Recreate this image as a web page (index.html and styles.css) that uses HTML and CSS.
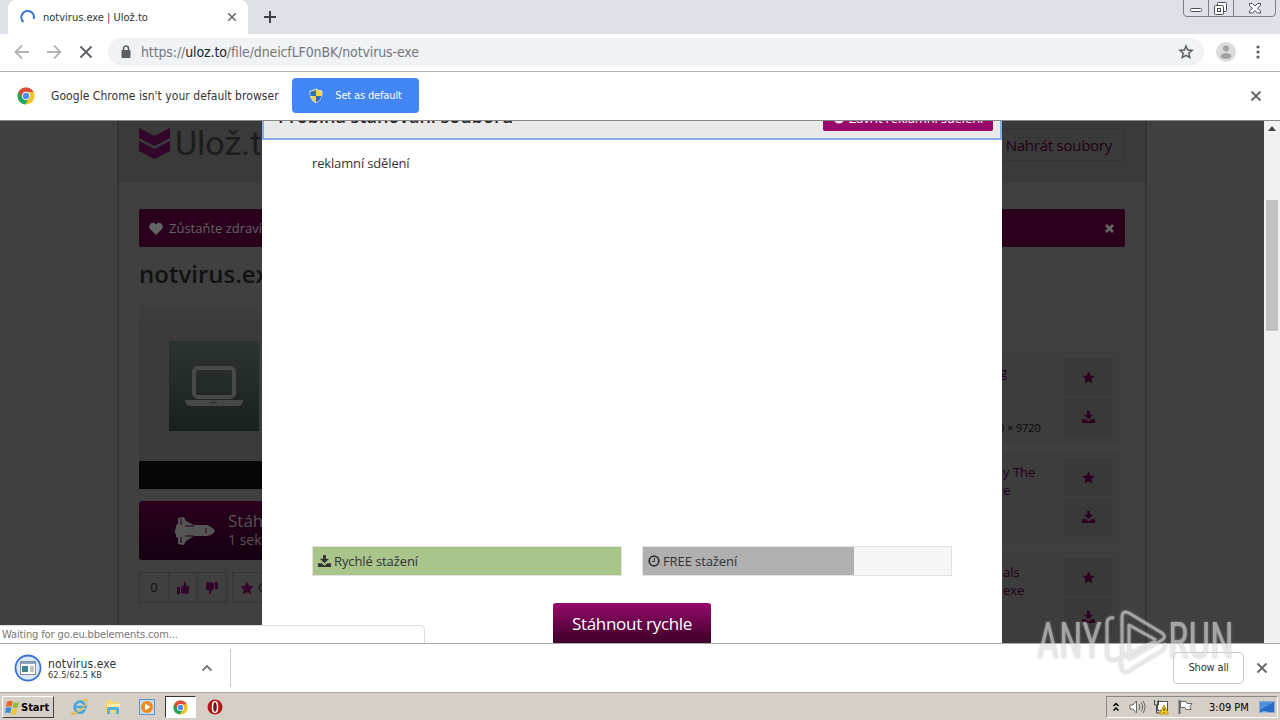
FILE: index.html
```html
<!DOCTYPE html>
<html lang="cs">
<head>
  <meta charset="UTF-8">
  <meta name="viewport" content="width=device-width, initial-scale=1.0">
  <title>notvirus.exe | Ulož.to</title>
  <link rel="stylesheet" href="styles.css">
</head>
<body>
  <!-- shared icons -->
  <svg class="defs" width="0" height="0">
    <symbol id="star" viewBox="0 0 14 14"><path d="M7 .5l2 4.3 4.6.6-3.4 3.2.9 4.7L7 11l-4.1 2.3.9-4.7L.4 5.4 5 4.8z"/></symbol>
    <symbol id="download" viewBox="0 0 14 14"><path d="M5.500 0h3v4h3.500L7 9 2 4h3.500zM0 9h4l3 2.500L10 9h4v4H0z"/></symbol>
    <symbol id="chrome" viewBox="0 0 18 18">
      <circle cx="9" cy="9" r="8.5" fill="#fbc116"/>
      <path d="M9 9L1.6 4.8A8.5 8.5 0 0 0 8 17.4l4.5-6.4z" fill="#1da462"/>
      <path d="M1.6 4.8A8.5 8.5 0 0 1 16.5 5H9L5.5 11z" fill="#dd4b3e"/>
      <circle cx="9" cy="9" r="4.2" fill="#fff"/>
      <circle cx="9" cy="9" r="3.2" fill="#4c8bf5"/>
    </symbol>
    <symbol id="cross" viewBox="0 0 12 12"><path d="M1.5 1.5l9 9m0-9l-9 9" fill="none" stroke="currentColor" stroke-width="1.8"/></symbol>
  </svg>

  <div class="tabstrip">
    <div class="tab">
      <svg class="spinner" width="16" height="16"><path d="M3.500 13a6.300 6.300 0 1 1 10.200-3" fill="none" stroke="#2f6fdc" stroke-width="2"/></svg>
      <span class="tab-title">notvirus.exe | Ulož.to</span>
      <svg class="gray" width="10" height="10"><use href="#cross"/></svg>
    </div>
    <svg class="new-tab" width="12" height="12"><path d="M6 0v12M0 6h12" stroke="#3c4043" stroke-width="2"/></svg>
    <svg class="window-buttons" width="94" height="17" fill="none" stroke="#7c7f87">
      <path d="M.5 0v13q0 3.500 3.500 3.500h85q3.500 0 3.500-3.500V0M25.500 0v16M50.500 0v16"/>
      <g stroke="#4a4d55" fill="#fff">
        <rect x="7.500" y="8.500" width="11" height="3" rx="1"/>
        <rect x="34.500" y="2.500" width="9" height="9" rx="1"/>
        <rect x="31.500" y="5.500" width="9" height="9" rx="1"/>
        <rect x="34.500" y="8.500" width="3" height="3"/>
        <path d="M66.500 3.500h3l2.500 2.500 2.500-2.500h3v2l-3 2.800 3 2.700v2h-3L72 10.500 69.500 13h-3v-2l3-2.700-3-2.800z"/>
      </g>
    </svg>
  </div>

  <div class="toolbar">
    <svg class="nav" width="96" height="36" fill="none" stroke-width="1.800">
      <path d="M29 18H15.500m6.500-6.500L15.500 18l6.500 6.500M47 18h13.500m-6.500-6.500l6.500 6.500-6.500 6.500" stroke="#b4b4b4"/>
      <path d="M80.500 12.500l11 11m0-11l-11 11" stroke="#5a5d61"/>
    </svg>
    <div class="omnibox">
      <svg width="10" height="14"><path d="M2.500 6V3.500a2.500 2.500 0 0 1 5 0V6" fill="none" stroke="#5a5d61" stroke-width="1.500"/><rect x=".5" y="5" width="9" height="8" rx="1" fill="#5a5d61"/></svg>
      <span class="url">https://<b>uloz.to</b>/file/dneicfLF0nBK/notvirus-exe</span>
      <svg class="bookmark" width="16" height="16"><path d="M8 2l1.700 4 4.400.4-3.300 2.900 1 4.300L8 11.400l-3.800 2.200 1-4.300L1.900 6.400 6.300 6z" fill="none" stroke="#5a5d61" stroke-width="1.500"/></svg>
    </div>
    <svg class="avatar" width="20" height="20"><circle cx="10" cy="10" r="10" fill="#dcdcdc"/><circle cx="10" cy="6.500" r="3" fill="#a2a2a2"/><ellipse cx="10" cy="14" rx="5.500" ry="3" fill="#a2a2a2"/></svg>
    <svg width="4" height="14" fill="#5a5d61"><circle cx="2" cy="2" r="1.600"/><circle cx="2" cy="7" r="1.600"/><circle cx="2" cy="12" r="1.600"/></svg>
  </div>

  <div class="infobar">
    <svg width="18" height="18"><use href="#chrome"/></svg>
    <span class="infobar-text">Google Chrome isn't your default browser</span>
    <button class="set-default">
      <svg width="14" height="16"><path d="M7 1q3 2 6 2 .5 8.500-6 12Q.5 11.500 1 3q3 0 6-2z" fill="#f6d33c" stroke="#dce6f2"/><path d="M7 2v6H1.500V3.500Q5 3 7 2zM7 8h5.500Q11 12.500 7 14.500z" fill="#2c6bb8"/></svg>
      <span>Set as default</span>
    </button>
    <svg class="gray" width="12" height="12"><use href="#cross"/></svg>
  </div>

  <div class="viewport">
    <div class="page">
      <header class="site-header">
        <svg width="31" height="31" fill="#32052a"><path d="M0 0l15.500 8L31 0v10l-15.500 8L0 10zM0 13l15.500 8L31 13v10l-15.500 8L0 23z"/></svg>
        <span class="logo-text">Ulož.to</span>
        <span class="upload"><i>.</i> Nahrát soubory</span>
      </header>
      <div class="alert">
        <svg width="14" height="13" fill="#636363"><path d="M7 13L1 7C-2 3 4-2 7 2.500 10-2 16 3 13 7z"/></svg>
        <span>Zůstaňte zdraví</span>
        <svg class="alert-close" width="9" height="9"><path d="M1 1l7 7m0-7L1 8" stroke="#666" stroke-width="2.800"/></svg>
      </div>
      <div class="columns">
        <main class="file">
          <h1>notvirus.exe</h1>
          <div class="preview">
            <div class="thumb">
              <svg width="60" height="42"><rect x="10" y="3" width="40" height="29" rx="4" fill="none" stroke="#464a49" stroke-width="4"/><path d="M1 35h58q0 6-6 6H7q-6 0-6-6z" fill="#454847"/><path d="M26 37.500h7" stroke="#262b29"/></svg>
            </div>
          </div>
          <div class="black-bar"></div>
          <div class="download">
            <svg width="42" height="30" fill="#555"><path d="M3 2l6-1 2 4 8 4h13q6 2 8 6-2 4-8 5H19l-8 5-2 4-6-1v-6l-2-1v-3l-1-1v-3l1-2v-3l2-1z"/><path d="M6 3v6M6 21v6M10 10h9M10 20h9M31 12v5" stroke="#23001a"/></svg>
            <div><div class="big">Stáhnout</div><div>1 sekunda</div></div>
          </div>
          <div class="actions">
            <div class="votes">
              <span>0</span>
              <span><svg width="14" height="14" fill="#31062a"><path d="M1 6h3v7H1zM5 6l3-2V1h2v4h3q1 1 0 2v5q-1 1-3 1L5 12z"/></svg></span>
              <span><svg class="flip" width="14" height="14" fill="#31062a"><path d="M1 6h3v7H1zM5 6l3-2V1h2v4h3q1 1 0 2v5q-1 1-3 1L5 12z"/></svg></span>
            </div>
            <div class="favorite"><svg width="14" height="14" fill="#31062a"><use href="#star"/></svg> Oblíbené</div>
          </div>
        </main>
        <aside class="related">
          <div class="card">
            <div class="card-text"><span class="cut">g</span><small>0 × 9720</small></div>
            <div class="card-buttons"><span><svg><use href="#star"/></svg></span><span><svg><use href="#download"/></svg></span></div>
          </div>
          <div class="card">
            <div class="card-text"><span>y The<br>e</span></div>
            <div class="card-buttons"><span><svg><use href="#star"/></svg></span><span><svg><use href="#download"/></svg></span></div>
          </div>
          <div class="card">
            <div class="card-text"><span>als<br>exe</span></div>
            <div class="card-buttons"><span><svg><use href="#star"/></svg></span><span><svg><use href="#download"/></svg></span></div>
          </div>
        </aside>
      </div>
    </div>

    <div class="scrollbar">
      <svg width="8" height="5"><path d="M0 5l4-5 4 5z" fill="#444"/></svg>
      <div class="scroll-thumb"></div>
    </div>

    <div class="modal">
      <div class="modal-header">
        <h2>Probíhá stahování souboru</h2>
        <button class="modal-close"><svg width="12" height="12"><circle cx="6" cy="6" r="5.500" fill="#f3dced"/></svg> Zavřít reklamní sdělení</button>
      </div>
      <div class="modal-body">
        <div class="ad-label">reklamní sdělení</div>
        <div class="bars">
          <div class="bar"><div class="fill green"><svg width="13" height="13" fill="#333"><use href="#download"/></svg> Rychlé stažení</div></div>
          <div class="bar"><div class="fill silver"><svg width="12" height="12" fill="none" stroke="#333"><circle cx="6" cy="6" r="4.800" stroke-width="1.800"/><path d="M6.500 3v3.500H4"/></svg> FREE stažení</div></div>
        </div>
        <button class="fast">Stáhnout rychle</button>
      </div>
    </div>
    <div class="status">Waiting for go.eu.bbelements.com...</div>
  </div>

  <div class="shelf">
    <svg width="28" height="28"><circle cx="14" cy="14" r="12.500" fill="#dbe8fb" stroke="#3874d0" stroke-width="1.800"/><rect x="6.500" y="7.500" width="15" height="13" fill="#fff" stroke="#8a8f94"/><path d="M7 9h14" stroke="#8aa3c0" stroke-width="2"/><path d="M8 12h6v6H8z" fill="#3b8791"/><path d="M16 13h4M16 15h4M16 17h4" stroke="#888"/></svg>
    <div class="item"><div class="item-name">notvirus.exe</div><div class="item-size">62.5/62.5 KB</div></div>
    <svg class="chevron" width="12" height="8"><path d="M1.500 6.500L6 2l4.500 4.500" fill="none" stroke="#777" stroke-width="1.800"/></svg>
    <button class="show-all">Show all</button>
    <svg class="gray" width="12" height="12"><use href="#cross"/></svg>
  </div>

  <div class="taskbar">
    <div class="start"><svg width="15" height="15"><path d="M2 2q3-2 5.500-.5L6.500 7Q4 5.500 1 7z" fill="#e8642c"/><path d="M8.500 2Q11 3.500 14 2l-1.500 5.500Q10 9 7.500 7.500z" fill="#8fbf3a"/><path d="M.8 8Q4 6.500 6.300 8l-1 5.500Q3 12 0 13z" fill="#3c8bd8"/><path d="M7.300 8.500q2.500 1.500 5 0L11 14q-2.500 1.500-5 0z" fill="#f5c32c"/></svg>Start</div>
    <svg class="ie" width="18" height="18" fill="none"><path d="M14 11.500A5.500 5.500 0 1 1 14.500 9H4" stroke="#45a7de" stroke-width="2.600"/><path d="M2 14Q-1 18 4 15.500 12 11 16 4q1-4-4-1.500" stroke="#e6bd3c" stroke-width="1.400"/></svg>
    <svg width="18" height="18"><path d="M2 2h6l1 2h7v11H2z" fill="#f3d779"/><path d="M3 6h13v5H3z" fill="#fbedad"/><path d="M3 16V9h12v7h-3v-4H6v4z" fill="#58b3dc"/></svg>
    <svg width="18" height="18"><rect x="1.500" y="1.500" width="15" height="15" fill="#c5def2" stroke="#5d93c5"/><circle cx="9" cy="9" r="6" fill="#f18a1d"/><path d="M7 5.500v7L12.500 9z" fill="#fff"/></svg>
    <div class="running"><svg width="15" height="15"><use href="#chrome"/></svg></div>
    <svg class="opera" width="16" height="16"><circle cx="8" cy="8" r="7.500" fill="#b81418"/><ellipse cx="8" cy="8" rx="2.500" ry="5.500" fill="#801010" stroke="#fff" stroke-width="1.500"/></svg>
    <div class="tray">
      <svg width="6" height="10" fill="none" stroke="#000" stroke-width="1.500"><path d="M.5 4L3 1.500 5.500 4M.5 8.500L3 6l2.500 2.500"/></svg>
      <svg class="volume" width="17" height="14" fill="#fff" stroke="#666"><path d="M1 5h3l3.500-4v12L4 9H1z"/><path d="M10 4q2 3 0 6M12 2.500q3.500 4.500 0 9M14 1q4 6 0 12" fill="none"/></svg>
      <svg class="network" width="16" height="16"><rect x="4.500" y="2.500" width="10" height="9" fill="#fff" stroke="#555"/><path d="M1.500 1v5h4V1M3.500 6v8h4" fill="none" stroke="#444"/><path d="M11 6l4.500 9h-9z" fill="#f7d416" stroke="#c29b00"/><path d="M11 9v3M11 13v1" stroke="#222"/></svg>
      <svg width="16" height="16"><path d="M2.500 1v14" stroke="#666" stroke-width="2"/><path d="M3.500 2.500H9l1 2h5l-2 3 1 3H9l-1-2H3.500z" fill="#fff" stroke="#666"/></svg>
      <span class="clock">3:09 PM</span>
      <svg width="16" height="13"><rect x=".5" y=".5" width="15" height="11" fill="#2a6bc5" stroke="#91a9c4"/><path d="M1 1h14L1 9z" fill="#4c91df"/><path d="M3 11h5" stroke="#bce0fa"/></svg>
    </div>
  </div>

  <svg class="watermark" width="206" height="76" viewBox="0 0 206 76">
    <g fill="#dcdcdc" font-family="Roboto, sans-serif" font-size="50">
      <text x="3" y="55" textLength="65" lengthAdjust="spacingAndGlyphs">ANY</text>
      <text x="134" y="55" textLength="66" lengthAdjust="spacingAndGlyphs">RUN</text>
    </g>
    <g fill="none" stroke="#dcdcdc" stroke-width="3" stroke-linejoin="round">
      <path d="M88 57V13q1-6 7-3l33 20q5 4 0 7L95 56V22l27 15"/>
      <path d="M80 15q-7-1-7 5v32q1 6 8 5l41-19M87 58v7q2 6 8 3l34-21q3-3 1-7"/>
    </g>
  </svg>
</body>
</html>
```
FILE: styles.css
```css
* {
  box-sizing: border-box;
}

body {
  margin: 0;
  width: 1280px;
  height: 720px;
  overflow: hidden;
  display: flex;
  flex-direction: column;
  position: relative;
  font-family: "DejaVu Sans Condensed", "DejaVu Sans", sans-serif;
  font-stretch: condensed;
  font-size: 11px;
  color: #333;
  background: #fff;
}

svg {
  flex: none;
}

button {
  font: inherit;
  border: none;
  padding: 0;
}

.defs {
  display: none;
}

.gray {
  color: #666;
}

/* browser chrome */
.tabstrip {
  height: 34px;
  flex: none;
  display: flex;
  background: #dee1e8;
}

.tab {
  width: 240px;
  margin-left: 8px;
  padding: 0 11px 0 12px;
  display: flex;
  align-items: center;
  background: #fff;
  border-radius: 8px 8px 0 0;
}

.tab-title {
  flex: 1;
  margin-left: 7px;
}

.new-tab {
  margin: 11px 0 0 16px;
}

.window-buttons {
  margin-left: auto;
  margin-right: 3px;
}

.toolbar {
  height: 38px;
  flex: none;
  display: flex;
  align-items: center;
  padding: 0 20px 2px 0;
  border-bottom: 1px solid #b0b0b0;
}

.omnibox {
  width: 1096px;
  height: 28px;
  margin-left: 12px;
  padding: 0 10px 0 13px;
  display: flex;
  align-items: center;
  border-radius: 14px;
  background: #f0f2f5;
}

.url {
  flex: 1;
  margin-left: 10px;
  font-size: 14px;
  letter-spacing: -0.12px;
  color: #75787c;
}

.url b {
  font-weight: normal;
  color: #222;
}

.avatar {
  margin: 0 auto 0 12px;
}

.infobar {
  height: 49px;
  flex: none;
  display: flex;
  align-items: center;
  padding: 0 18px 1px 17px;
  border-bottom: 1px solid #888;
}

.infobar-text {
  width: 241px;
  margin-left: 16px;
  font-size: 12px;
  letter-spacing: 0.05px;
  white-space: nowrap;
}

.set-default {
  width: 127px;
  height: 35px;
  margin-right: auto;
  display: flex;
  align-items: center;
  justify-content: center;
  gap: 12px;
  color: #fff;
  background: #4285f4;
  border-radius: 4px;
  letter-spacing: -0.15px;
}

/* web page */
.viewport {
  height: 522px;
  flex: none;
  position: relative;
  overflow: hidden;
  display: flex;
  background: #404040;
  font-family: "Open Sans", "Noto Sans", sans-serif;
  font-stretch: normal;
  font-size: 13px;
}

.page {
  width: 1030px;
  margin-left: 117px;
  border: solid #353535;
  border-width: 0 2px;
}

.site-header {
  height: 62px;
  display: flex;
  align-items: flex-start;
  padding: 7px 20px 0 20px;
  background: #3a3a3a;
}

.logo-text {
  margin: -7px 0 0 5px;
  font-family: Roboto, sans-serif;
  font-size: 34px;
  line-height: 45px;
  color: #1c1c1c;
}

.upload {
  width: 158px;
  height: 33px;
  margin-left: auto;
  padding-right: 12px;
  text-align: right;
  line-height: 32px;
  font-size: 15px;
  letter-spacing: -0.25px;
  color: #220018;
  border: 1px solid #343434;
}

.upload i {
  font-style: normal;
}

.alert {
  height: 38px;
  margin: 26px 20px 0;
  padding: 0 11px 0 10px;
  display: flex;
  align-items: center;
  gap: 6px;
  color: #636363;
  background: #2a001c;
  border-radius: 2px;
}

.alert-close {
  margin-left: auto;
}

.columns {
  display: flex;
  justify-content: space-between;
  padding: 0 26px 0 20px;
}

.file {
  width: 600px;
}

h1 {
  margin: 8px 0 0;
  font-size: 24px;
  line-height: 38px;
  font-weight: 600;
  color: #111;
}

.preview {
  height: 155px;
  margin-top: 13px;
  padding: 35px 30px;
  background: linear-gradient(#3e3e3e, #3b3b3b 20px);
}

.thumb {
  width: 90px;
  height: 90px;
  display: flex;
  align-items: center;
  justify-content: center;
  background: linear-gradient(#2d3332, #18201e);
}

.black-bar {
  height: 28px;
  background: #060606;
}

.download {
  height: 59px;
  margin-top: 12px;
  padding-left: 36px;
  display: flex;
  align-items: center;
  gap: 11px;
  font-size: 14px;
  line-height: 18px;
  color: #555;
  background: linear-gradient(#2b001e, #130010);
  border-radius: 3px;
}

.big {
  margin-top: -2px;
  font-size: 17px;
  line-height: 20px;
}

.actions {
  display: flex;
  gap: 5px;
  margin-top: 12px;
  font-size: 13px;
  line-height: 29px;
  color: #111;
}

.votes {
  width: 88px;
  display: flex;
  border: 1px solid #353535;
}

.votes span {
  flex: 1;
  display: flex;
  align-items: center;
  justify-content: center;
}

.votes span + span {
  border-left: 1px solid #353535;
}

.flip {
  transform: rotate(180deg);
}

.favorite {
  display: flex;
  align-items: center;
  gap: 4px;
  padding: 0 7px;
  border: 1px solid #353535;
}

.related {
  width: 250px;
  padding-top: 105px;
  display: flex;
  flex-direction: column;
  gap: 8px;
  color: #220018;
}

.card {
  height: 92px;
  flex: none;
  display: flex;
  justify-content: space-between;
  padding: 6px 7px 0 132px;
  background: #3d3d3d;
}

.card-text {
  display: flex;
  flex-direction: column;
  justify-content: space-between;
  padding: 5px 0 7px 2px;
  line-height: 18px;
  white-space: nowrap;
}

.cut {
  margin-left: -3px;
}

.card-text small {
  margin-left: -5px;
  font-size: 11px;
  letter-spacing: -0.1px;
  color: #090909;
}

.card-buttons {
  width: 48px;
  display: flex;
  flex-direction: column;
  gap: 2px;
}

.card-buttons span {
  height: 38px;
  display: flex;
  align-items: center;
  justify-content: center;
  background: #393939;
}

.card-buttons svg {
  width: 13px;
  height: 13px;
  fill: #2b001e;
}

.scrollbar {
  width: 16px;
  margin-left: auto;
  padding-top: 5px;
  display: flex;
  flex-direction: column;
  align-items: center;
  background: #f1f1f1;
}

.scroll-thumb {
  width: 12px;
  height: 131px;
  margin-top: 69px;
  background: #c1c1c1;
}

/* download dialog, already scrolled up a bit */
.modal {
  position: absolute;
  left: 262px;
  top: 0;
  width: 740px;
  height: 522px;
  background: #fff;
}

.modal-header {
  height: 19px;
  display: flex;
  align-items: flex-end;
  justify-content: space-between;
  padding: 0 7px 0 14px;
  overflow: hidden;
  background: #e9e9e9;
  border: 2px solid #84aee6;
  border-width: 0 2px 2px;
}

.modal-header h2 {
  margin: 0 0 9px;
  font-size: 18px;
  line-height: 26px;
  font-weight: 600;
  color: #222;
}

.modal-close {
  width: 170px;
  height: 32px;
  flex: none;
  margin-bottom: 7px;
  padding-top: 5px;
  display: flex;
  align-items: center;
  justify-content: center;
  gap: 4px;
  white-space: nowrap;
  letter-spacing: -0.15px;
  color: #fff;
  background: #97096b;
  border-radius: 2px;
}

.modal-body {
  padding: 14px 50px 0;
}

.ad-label {
  height: 392px;
  line-height: 18px;
  letter-spacing: -0.15px;
}

.bars {
  display: flex;
  gap: 20px;
}

.bar {
  width: 310px;
  height: 30px;
  border: 1px solid #e2e2e2;
  background: #f6f6f6;
}

.fill {
  height: 28px;
  display: flex;
  align-items: center;
  gap: 3px;
  padding-left: 5px;
  letter-spacing: -0.1px;
}

.green {
  background: #a9c58c;
}

.silver {
  width: 211px;
  background: #b0b0b0;
}

.fast {
  display: block;
  width: 158px;
  height: 60px;
  margin: 27px auto 0;
  padding-bottom: 19px;
  font-size: 17px;
  letter-spacing: -0.3px;
  color: #fff;
  background: linear-gradient(#96096b, #3c0028 40px);
  border-radius: 3px;
}

.status {
  position: absolute;
  left: 0;
  bottom: 0;
  width: 425px;
  height: 18px;
  padding-left: 2px;
  line-height: 17px;
  font-family: "DejaVu Sans Condensed", "DejaVu Sans", sans-serif;
  font-stretch: condensed;
  font-size: 11px;
  letter-spacing: -0.12px;
  color: #777;
  background: #fff;
  border: solid #ddd;
  border-width: 1px 1px 0 0;
  border-radius: 0 5px 0 0;
}

/* download shelf */
.shelf {
  height: 49px;
  flex: none;
  display: flex;
  align-items: center;
  padding: 0 12px 1px 14px;
  border-top: 1px solid #aaa;
}

.item {
  width: 153px;
  margin-left: 6px;
}

.item-name {
  margin-top: 2px;
  font-size: 12px;
  line-height: 12px;
  letter-spacing: 0.15px;
}

.item-size {
  font-size: 9px;
  line-height: 10px;
  letter-spacing: 0.15px;
}

.chevron {
  box-sizing: content-box;
  padding: 15px 17px 15px 0;
  border-right: 1px solid #ccc;
}

.show-all {
  width: 71px;
  height: 32px;
  margin: 0 12px 0 auto;
  letter-spacing: -0.15px;
  color: #333;
  background: #fff;
  border: 1px solid #ccc;
  border-radius: 4px;
}

.taskbar {
  height: 28px;
  flex: none;
  display: flex;
  align-items: center;
  padding: 1px 2px 0;
  color: #000;
  background: #d6cfc7;
  border-top: 1px solid #aaa;
}

.start {
  width: 52px;
  height: 22px;
  margin-right: 17px;
  display: flex;
  align-items: center;
  gap: 1px;
  padding-left: 2px;
  font-weight: bold;
  border: 1px solid;
  border-color: #fff #404040 #404040 #fff;
}

.ie {
  margin-right: 15px;
}

.taskbar > svg + svg {
  margin-right: 16px;
}

.running {
  width: 31px;
  height: 22px;
  margin-left: -7px;
  display: flex;
  align-items: center;
  justify-content: center;
  background: #fff;
  border: 1px solid;
  border-color: #333 #fff #fff #333;
}

.opera {
  margin-left: 11px;
}

.tray {
  width: 172px;
  height: 22px;
  margin-left: auto;
  display: flex;
  align-items: center;
  padding: 0 2px 0 6px;
  border: 1px solid;
  border-color: #888 #fff #fff #888;
}

.volume {
  margin-left: 10px;
}

.network {
  margin: 0 8px 0 7px;
}

.clock {
  width: 51px;
  margin-left: 16px;
  white-space: nowrap;
}

.watermark {
  position: absolute;
  left: 1034px;
  top: 603px;
  opacity: 0.65;
  filter: drop-shadow(0 0 1px #aaa);
}
```
